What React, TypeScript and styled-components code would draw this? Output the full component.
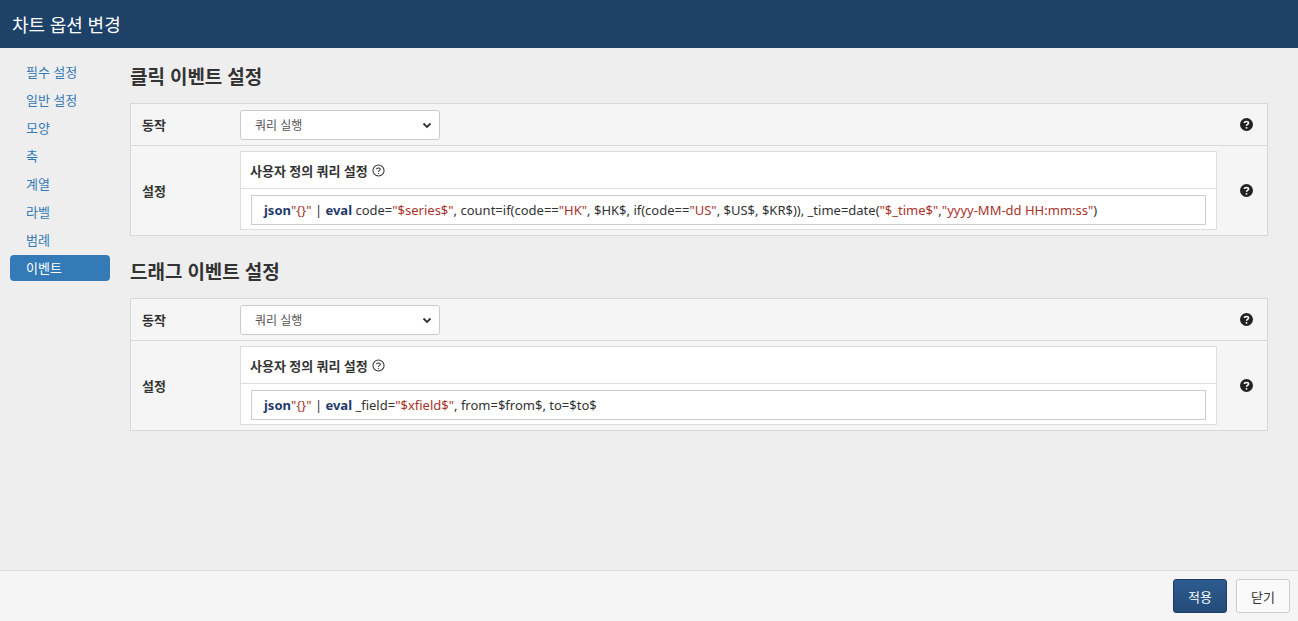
import styled, { createGlobalStyle } from "styled-components";

const GlobalStyle = createGlobalStyle`
  html, body { margin: 0; padding: 0; }
  body {
    font-family: "Noto Sans", "Noto Sans CJK KR", sans-serif;
    font-size: 13px;
    color: #333;
    background: #eeeeee;
  }
`;

const Modal = styled.div`
  width: 1298px;
  height: 621px;
  display: flex;
  flex-direction: column;
  background: #eeeeee;
`;

const Header = styled.div`
  height: 48px;
  background: #1e4167;
  color: #fff;
  font-size: 18px;
  display: flex;
  align-items: center;
  padding-left: 12px;
  flex-shrink: 0;
`;

const Body = styled.div`
  flex: 1;
  display: flex;
  padding: 11px 30px 0 10px;
  gap: 20px;
`;

const Sidebar = styled.ul`
  list-style: none;
  margin: 0;
  padding: 0;
  width: 100px;
  flex-shrink: 0;
`;

const NavItem = styled.li<{ $active?: boolean }>`
  height: 26px;
  margin-bottom: 2px;
  line-height: 26px;
  padding-left: 16px;
  border-radius: 4px;
  color: ${(p) => (p.$active ? "#fff" : "#337ab7")};
  background: ${(p) => (p.$active ? "#337ab7" : "transparent")};
  font-size: 13px;
`;

const Content = styled.div`
  flex: 1;
  padding-top: 3px;
`;

const Title = styled.h2`
  font-size: 19px;
  font-weight: bold;
  margin: 0;
  height: 30px;
  line-height: 30px;
  color: #333;
  margin-bottom: 11px;
`;

const Table = styled.div`
  border: 1px solid #d8d8d8;
  background: #f5f5f5;
  margin-bottom: 21px;
`;

const Row = styled.div<{ $h: number }>`
  display: grid;
  grid-template-columns: 109px 1fr 50px;
  align-items: center;
  height: ${(p) => p.$h}px;
  & + & { border-top: 1px solid #d8d8d8; }
`;

const Label = styled.div`
  font-weight: bold;
  padding-left: 11px;
  font-size: 13px;
`;

const Select = styled.div`
  width: 200px;
  height: 30px;
  box-sizing: border-box;
  border: 1px solid #ccc;
  border-radius: 3px;
  background: #fff;
  display: flex;
  align-items: center;
  justify-content: space-between;
  padding: 0 6px 0 14px;
  font-size: 12px;
  color: #555;
`;

const Help = styled.div`
  display: flex;
  justify-content: center;
  padding-left: 8px;
`;

const Panel = styled.div`
  border: 1px solid #ddd;
  background: #fff;
`;

const PanelHead = styled.div`
  height: 36px;
  display: flex;
  align-items: center;
  gap: 4px;
  padding-left: 9px;
  font-weight: bold;
  border-bottom: 1px solid #ddd;
`;

const PanelBody = styled.div`
  padding: 6px 10px 4px 10px;
`;

const Code = styled.div`
  height: 30px;
  box-sizing: border-box;
  border: 1px solid #ccc;
  display: flex;
  align-items: center;
  padding-left: 12px;
  font-size: 13px;
  white-space: pre;
  color: #333;
`;

const Kw = styled.span`
  font-weight: bold;
  color: #1f3a6b;
`;

const Str = styled.span`
  color: #a8332b;
`;

const Footer = styled.div`
  height: 50px;
  border-top: 1px solid #ddd;
  background: #f5f5f5;
  display: flex;
  align-items: center;
  justify-content: flex-end;
  gap: 9px;
  padding-right: 8px;
  flex-shrink: 0;
`;

const Button = styled.button<{ $primary?: boolean }>`
  height: 34px;
  width: 54px;
  border-radius: 3px;
  font-family: inherit;
  font-size: 13px;
  border: 1px solid ${(p) => (p.$primary ? "#1f3d64" : "#ccc")};
  background: ${(p) => (p.$primary ? "linear-gradient(#2d5c8f, #234b78)" : "#fafafa")};
  color: ${(p) => (p.$primary ? "#fff" : "#333")};
`;

const Chevron = () => (
  <svg width="12" height="12" viewBox="0 0 12 12">
    <path d="M2.5 4.5 L6 8 L9.5 4.5" fill="none" stroke="#333" strokeWidth="1.8" />
  </svg>
);

const QIcon = () => (
  <svg width="13" height="13" viewBox="0 0 14 14">
    <circle cx="7" cy="7" r="7" fill="#222" />
    <path d="M4.8 5.3 C4.8 3.2 9.2 3.2 9.2 5.3 C9.2 6.8 7 6.8 7 8.4" fill="none" stroke="#fff" strokeWidth="1.7" />
    <circle cx="7" cy="10.6" r="1" fill="#fff" />
  </svg>
);

const QOutline = () => (
  <svg width="13" height="13" viewBox="0 0 14 14">
    <circle cx="7" cy="7" r="6" fill="none" stroke="#333" strokeWidth="1.1" />
    <path d="M5 5.6 C5 3.8 9 3.8 9 5.6 C9 6.9 7 6.9 7 8.5" fill="none" stroke="#333" strokeWidth="1.1" />
    <circle cx="7" cy="10.3" r="0.7" fill="#333" />
  </svg>
);

function EventTable({ code }: { code: React.ReactNode }) {
  return (
    <Table>
      <Row $h={41}>
        <Label>동작</Label>
        <Select>
          <span>쿼리 실행</span>
          <Chevron />
        </Select>
        <Help><QIcon /></Help>
      </Row>
      <Row $h={89}>
        <Label>설정</Label>
        <Panel>
          <PanelHead>사용자 정의 쿼리 설정 <QOutline /></PanelHead>
          <PanelBody>
            <Code>{code}</Code>
          </PanelBody>
        </Panel>
        <Help><QIcon /></Help>
      </Row>
    </Table>
  );
}

export default function App() {
  const nav = ["필수 설정", "일반 설정", "모양", "축", "계열", "라벨", "범례", "이벤트"];
  return (
    <>
      <GlobalStyle />
      <Modal>
        <Header>차트 옵션 변경</Header>
        <Body>
          <Sidebar>
            {nav.map((n) => (
              <NavItem key={n} $active={n === "이벤트"}>{n}</NavItem>
            ))}
          </Sidebar>
          <Content>
            <Title>클릭 이벤트 설정</Title>
            <EventTable
              code={
                <>
                  <Kw>json</Kw>{" "}<Str>"{"{}"}"</Str>{" | "}<Kw>eval</Kw>{" code="}<Str>"$series$"</Str>, count=if(code==<Str>"HK"</Str>, $HK$, if(code==<Str>"US"</Str>, $US$, $KR$)), _time=date(<Str>"$_time$"</Str>,<Str>"yyyy-MM-dd HH:mm:ss"</Str>)
                </>
              }
            />
            <Title>드래그 이벤트 설정</Title>
            <EventTable
              code={
                <>
                  <Kw>json</Kw>{" "}<Str>"{"{}"}"</Str>{" | "}<Kw>eval</Kw>{" _field="}<Str>"$xfield$"</Str>, from=$from$, to=$to$
                </>
              }
            />
          </Content>
        </Body>
        <Footer>
          <Button $primary>적용</Button>
          <Button>닫기</Button>
        </Footer>
      </Modal>
    </>
  );
}
